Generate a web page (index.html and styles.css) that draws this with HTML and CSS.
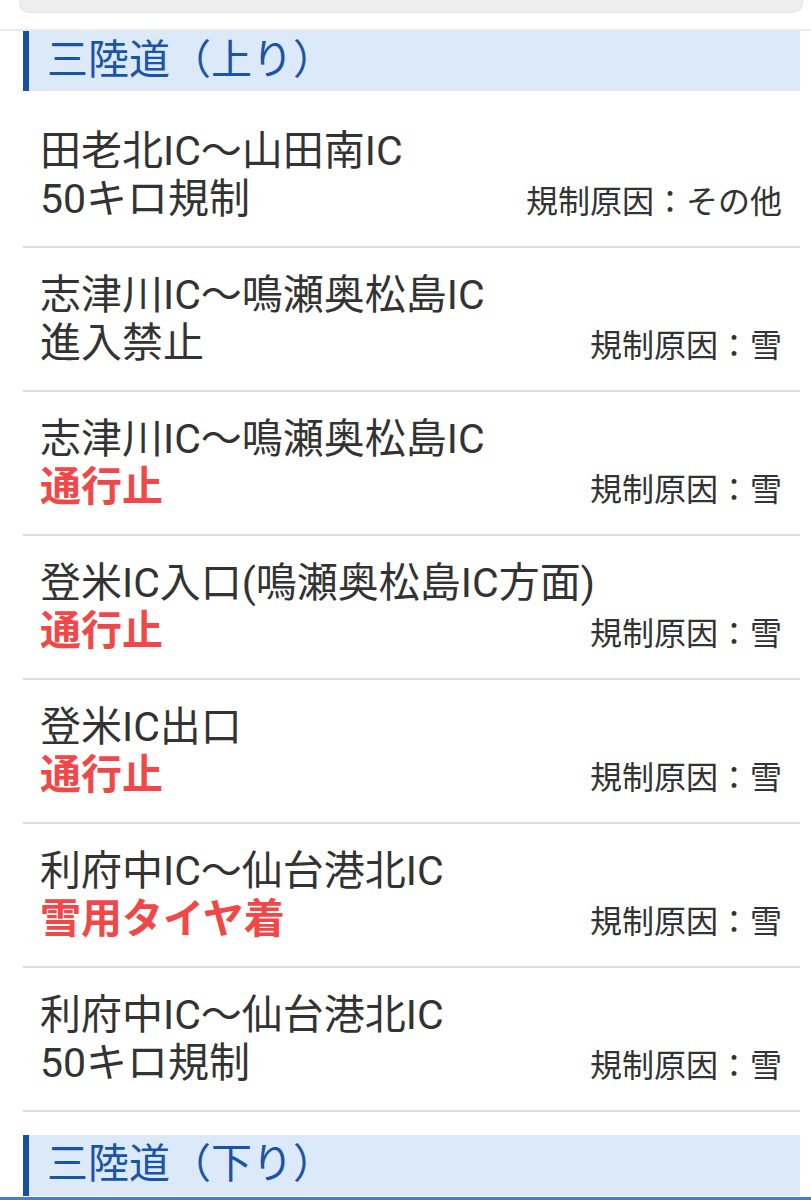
FILE: index.html
```html
<!DOCTYPE html>
<html lang="ja">
<head>
    <meta charset="UTF-8">
    <meta name="viewport" content="width=device-width, initial-scale=1.0">
    <title>規制情報</title>
    <link rel="stylesheet" href="styles.css">
</head>
<body>

<div class="top-box"></div>
<div class="divider"></div>

<div class="section">
    <h2 class="section-title">三陸道（上り）</h2>
    <ul class="reg-list">
        <li class="reg-item">
            <div class="reg-place">田老北IC〜山田南IC</div>
            <div class="reg-row">
                <span class="reg-type">50キロ規制</span>
                <span class="reg-cause">規制原因：その他</span>
            </div>
        </li>
        <li class="reg-item">
            <div class="reg-place">志津川IC〜鳴瀬奥松島IC</div>
            <div class="reg-row">
                <span class="reg-type">進入禁止</span>
                <span class="reg-cause">規制原因：雪</span>
            </div>
        </li>
        <li class="reg-item">
            <div class="reg-place">志津川IC〜鳴瀬奥松島IC</div>
            <div class="reg-row">
                <span class="reg-type alert">通行止</span>
                <span class="reg-cause">規制原因：雪</span>
            </div>
        </li>
        <li class="reg-item">
            <div class="reg-place">登米IC入口(鳴瀬奥松島IC方面)</div>
            <div class="reg-row">
                <span class="reg-type alert">通行止</span>
                <span class="reg-cause">規制原因：雪</span>
            </div>
        </li>
        <li class="reg-item">
            <div class="reg-place">登米IC出口</div>
            <div class="reg-row">
                <span class="reg-type alert">通行止</span>
                <span class="reg-cause">規制原因：雪</span>
            </div>
        </li>
        <li class="reg-item">
            <div class="reg-place">利府中IC〜仙台港北IC</div>
            <div class="reg-row">
                <span class="reg-type alert">雪用タイヤ着</span>
                <span class="reg-cause">規制原因：雪</span>
            </div>
        </li>
        <li class="reg-item">
            <div class="reg-place">利府中IC〜仙台港北IC</div>
            <div class="reg-row">
                <span class="reg-type">50キロ規制</span>
                <span class="reg-cause">規制原因：雪</span>
            </div>
        </li>
    </ul>
</div>

<div class="section">
    <h2 class="section-title">三陸道（下り）</h2>
</div>

<div class="bottom-bar"></div>

</body>
</html>
```

FILE: styles.css
```css
/* Road regulation list */
body {
    margin: 0;
    background: #fff;
    color: #333;
    font-family: Roboto, "Noto Sans CJK JP", sans-serif;
}
.top-box {
    height: 12px;
    margin: 0 8px 0 19px;
    background: #efefef;
    border: 1px solid #e4e4e4;
    border-top: none;
    border-radius: 0 0 10px 10px;
}
.divider {
    height: 2px;
    margin-top: 16px;
    background: #ececec;
}
.section {
    margin: 0 11px 0 23px;
}
.section + .section {
    margin-top: 23px;
}
.section-title {
    margin: 0;
    height: 61px;
    line-height: 59px;
    padding-left: 18px;
    border-left: 6px solid #1a4f9e;
    background: #dce9f8;
    color: #1a55a5;
    font-size: 41px;
    font-weight: normal;
}
.section:first-child .section-title,
.divider + .section .section-title {
    height: 60px;
    line-height: 58px;
}
.reg-list {
    list-style: none;
    margin: 13px 0 0;
    padding: 0;
}
.reg-item {
    padding: 23px 18px 20px 17px;
    border-bottom: 2px solid #dddddd;
    line-height: 48px;
}
.reg-place {
    font-size: 41px;
}
.reg-row {
    display: flex;
    justify-content: space-between;
    align-items: baseline;
}
.reg-type {
    font-size: 41px;
}
.reg-type.alert {
    color: #f04848;
    font-weight: bold;
}
.reg-cause {
    font-size: 32px;
}
.bottom-bar {
    height: 3px;
    margin-top: 1px;
    background: #4a7cc9;
}
```
